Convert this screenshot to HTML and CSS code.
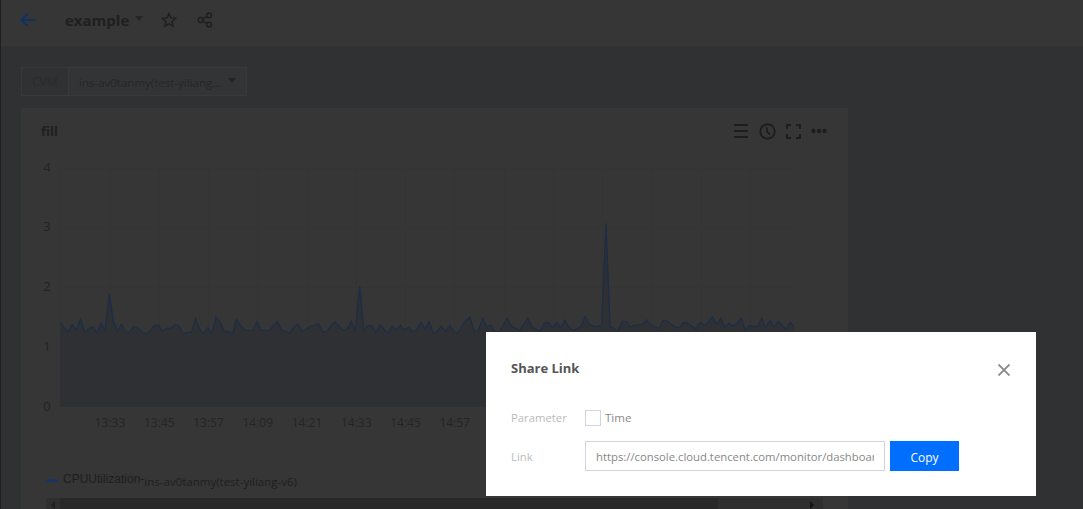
FILE: index.html
```html
<!DOCTYPE html>
<html lang="en">
<head>
<meta charset="utf-8">
<title>Share Link</title>
<link rel="stylesheet" href="styles.css">
</head>
<body>
<div class="page">
  <header class="topbar">
    <svg class="back" width="16" height="14" viewBox="0 0 16 14"><path d="M15.500 7H1.500M7.500 1L1.500 7L7.500 13" fill="none" stroke="#06316f" stroke-width="1.700"/></svg>
    <span class="dash-name">example</span>
    <span class="caret-small"></span>
    <svg class="star" width="16" height="16" viewBox="0 0 16 16"><path d="M8 1.600L9.900 5.900L14.600 6.400L11.100 9.500L12.100 14.100L8 11.700L3.900 14.100L4.900 9.500L1.400 6.400L6.100 5.900Z" fill="none" stroke="#1f1f1f" stroke-width="1.400" stroke-linejoin="miter"/></svg>
    <svg class="share" width="16" height="16" viewBox="0 0 16 16"><g fill="none" stroke="#1f1f1f" stroke-width="1.500"><circle cx="3.600" cy="8" r="2.400"/><circle cx="12" cy="3.400" r="2.400"/><circle cx="12" cy="12.600" r="2.400"/><path d="M5.700 6.800L9.900 4.600M5.700 9.200L9.900 11.400"/></g></svg>
  </header>
  <main class="content">
    <div class="filter">
      <span class="filter-label">CVM</span>
      <span class="filter-value">ins-av0tanmy(test-yiliang...</span>
      <span class="caret"></span>
    </div>
    <section class="card">
      <div class="card-head">
        <h2 class="card-title">fill</h2>
        <div class="tools">
          <svg width="16" height="16" viewBox="0 0 16 16"><path d="M1 2H15M1 8H15M1 14H15" stroke="#1d1d1d" stroke-width="2"/></svg>
          <svg width="17" height="17" viewBox="0 0 17 17"><circle cx="8.500" cy="8.500" r="7.200" fill="none" stroke="#1d1d1d" stroke-width="1.900"/><path d="M8 4.200V8.700L11 11.600" fill="none" stroke="#1d1d1d" stroke-width="1.700"/></svg>
          <svg width="15" height="15" viewBox="0 0 15 15"><path d="M1 5V1H5M10 1H14V5M14 10V14H10M5 14H1V10" fill="none" stroke="#1d1d1d" stroke-width="2"/></svg>
          <svg width="16" height="6" viewBox="0 0 16 6"><circle cx="2.500" cy="3" r="2.200" fill="#1d1d1d"/><circle cx="8" cy="3" r="2.200" fill="#1d1d1d"/><circle cx="13.500" cy="3" r="2.200" fill="#1d1d1d"/></svg>
        </div>
      </div>
      <svg class="chart" width="827" height="300" viewBox="21 150 827 300">
        <g class="grid">
          <path d="M60 168.500H795M60 227.500H795M60 287.500H795M60 347.500H795"/>
          <path d="M60.500 168V407M110.500 168V407M159.500 168V407M208.500 168V407M257.500 168V407M307.500 168V407M356.500 168V407M405.500 168V407M454.500 168V407M504.500 168V407M553.500 168V407M602.500 168V407M651.500 168V407M701.500 168V407M750.500 168V407"/>
        </g>
        <polygon class="area" points="60,407 60,322.300 64.100,327.700 68.200,331.700 72.300,324.300 76.400,330 80.500,319.300 84.600,332 88.700,329 92.800,326.700 96.900,333 101,323.300 105.100,330.300 109.300,294.300 113.400,321 117.500,331.300 121.600,324.300 125.700,332 129.800,332 133.900,326.300 138,328.300 142.100,331.700 146.200,334 150.300,330.700 154.400,325.300 158.500,325.300 162.600,331 166.800,328.300 170.900,328.300 175,324.300 179.100,326 183.200,334 187.300,332.300 191.400,332.300 195.500,318.300 199.600,329 203.700,333.300 207.800,327.700 211.900,333.300 216,317.300 220.100,322.300 224.300,331.300 228.400,331.300 232.500,334 236.600,319.300 240.700,325.700 244.800,330.300 248.900,330.300 253,330 257,321.700 261,330.300 265,330.300 269.300,330.300 273.300,325.700 277.300,321.700 281.700,330.300 285.700,331.300 289.700,333 293.700,327.300 298,324.300 302,331 306,329.300 310.300,326.300 314.300,325.300 318.300,323.300 322.700,332 326.700,331.300 330.700,326 335,322 339,325.700 343,330.300 347,329 351.300,321.300 355.300,331 359.700,286 363.700,330.300 367.700,326 371.700,325.300 376,332.300 380,324.700 384,329.300 388,333 392.300,326.300 396.300,330 400.300,325.300 404.300,330 408.700,327.300 412.700,331.300 416.700,330 421,322.300 425,329 429,321.700 433.300,333 437.300,331.700 441.300,325.700 445.700,331.300 449.700,325.300 453.700,331.300 457.700,333 462,326 466,320.300 470,317.300 474.300,331.300 478.300,330.300 482.700,318.300 486.700,326.700 491,325 495,331.700 499,331.700 503.300,325 507.300,318.300 511.700,326.700 515.700,328.300 519.700,330 524,324 528,318 532,327.300 536,329 540.300,331 544.300,323.300 548.300,322.300 552.700,327.300 556.700,322.300 560.700,328.300 564.700,320 569,327.300 573,330.300 577,328.700 581.300,326 585.300,316.300 589.300,324 593.700,326.300 597.700,326.300 601.700,325.300 606,223.300 610,326.300 614,328.700 618,330.700 622.300,321.300 626.300,321.300 630.300,327.300 634.300,325 638.700,325 642.700,324 646.700,320 651,325 655,327 659,328.300 663.300,320.300 667.300,321 671.300,324.300 675.700,327.300 679.700,327.300 683.700,322.300 687.700,323.300 692,326 696,329 700,322.300 704.300,325 708.300,322.300 712.300,316.700 716.700,324.300 720.700,318 724.700,327.300 728.700,323.300 733,326.300 737,323.300 741.300,318.300 745.300,330 749.300,325.300 753.300,326.300 757.700,326.300 761.700,318.300 765.700,327.300 770,320.300 774,327.300 778,321.700 782,325 786.300,329 790.300,322.300 794.300,327.300 794.300,407"/>
        <polyline class="line" points="60,322.300 64.100,327.700 68.200,331.700 72.300,324.300 76.400,330 80.500,319.300 84.600,332 88.700,329 92.800,326.700 96.900,333 101,323.300 105.100,330.300 109.300,294.300 113.400,321 117.500,331.300 121.600,324.300 125.700,332 129.800,332 133.900,326.300 138,328.300 142.100,331.700 146.200,334 150.300,330.700 154.400,325.300 158.500,325.300 162.600,331 166.800,328.300 170.900,328.300 175,324.300 179.100,326 183.200,334 187.300,332.300 191.400,332.300 195.500,318.300 199.600,329 203.700,333.300 207.800,327.700 211.900,333.300 216,317.300 220.100,322.300 224.300,331.300 228.400,331.300 232.500,334 236.600,319.300 240.700,325.700 244.800,330.300 248.900,330.300 253,330 257,321.700 261,330.300 265,330.300 269.300,330.300 273.300,325.700 277.300,321.700 281.700,330.300 285.700,331.300 289.700,333 293.700,327.300 298,324.300 302,331 306,329.300 310.300,326.300 314.300,325.300 318.300,323.300 322.700,332 326.700,331.300 330.700,326 335,322 339,325.700 343,330.300 347,329 351.300,321.300 355.300,331 359.700,286 363.700,330.300 367.700,326 371.700,325.300 376,332.300 380,324.700 384,329.300 388,333 392.300,326.300 396.300,330 400.300,325.300 404.300,330 408.700,327.300 412.700,331.300 416.700,330 421,322.300 425,329 429,321.700 433.300,333 437.300,331.700 441.300,325.700 445.700,331.300 449.700,325.300 453.700,331.300 457.700,333 462,326 466,320.300 470,317.300 474.300,331.300 478.300,330.300 482.700,318.300 486.700,326.700 491,325 495,331.700 499,331.700 503.300,325 507.300,318.300 511.700,326.700 515.700,328.300 519.700,330 524,324 528,318 532,327.300 536,329 540.300,331 544.300,323.300 548.300,322.300 552.700,327.300 556.700,322.300 560.700,328.300 564.700,320 569,327.300 573,330.300 577,328.700 581.300,326 585.300,316.300 589.300,324 593.700,326.300 597.700,326.300 601.700,325.300 606,223.300 610,326.300 614,328.700 618,330.700 622.300,321.300 626.300,321.300 630.300,327.300 634.300,325 638.700,325 642.700,324 646.700,320 651,325 655,327 659,328.300 663.300,320.300 667.300,321 671.300,324.300 675.700,327.300 679.700,327.300 683.700,322.300 687.700,323.300 692,326 696,329 700,322.300 704.300,325 708.300,322.300 712.300,316.700 716.700,324.300 720.700,318 724.700,327.300 728.700,323.300 733,326.300 737,323.300 741.300,318.300 745.300,330 749.300,325.300 753.300,326.300 757.700,326.300 761.700,318.300 765.700,327.300 770,320.300 774,327.300 778,321.700 782,325 786.300,329 790.300,322.300 794.300,327.300"/>
        <g class="y-labels">
          <text x="47" y="172">4</text>
          <text x="47" y="231">3</text>
          <text x="47" y="291">2</text>
          <text x="47" y="351">1</text>
          <text x="47" y="411">0</text>
        </g>
        <g class="x-labels">
          <text x="110" y="427">13:33</text>
          <text x="159.250" y="427">13:45</text>
          <text x="208.500" y="427">13:57</text>
          <text x="257.750" y="427">14:09</text>
          <text x="307" y="427">14:21</text>
          <text x="356.250" y="427">14:33</text>
          <text x="405.500" y="427">14:45</text>
          <text x="454.750" y="427">14:57</text>
        </g>
      </svg>
      <div class="legend">
        <span class="legend-mark"></span>
        <span class="legend-metric">CPUUtilization-</span><span class="legend-name">ins-av0tanmy(test-yiliang-v6)</span>
      </div>
      <div class="scrollbar">
        <span class="arrow-left"></span>
        <span class="thumb"></span>
        <span class="arrow-right"></span>
      </div>
    </section>
  </main>
</div>
<div class="dialog">
  <div class="dialog-head">
    <h3 class="dialog-title">Share Link</h3>
    <svg class="close" width="12" height="12" viewBox="0 0 12 12"><path d="M.500 .500L11.500 11.500M11.500 .500L.500 11.500" stroke="#888" stroke-width="1.800"/></svg>
  </div>
  <div class="form-row">
    <span class="form-label">Parameter</span>
    <span class="checkbox"></span>
    <span class="check-text">Time</span>
  </div>
  <div class="form-row link-row">
    <span class="form-label">Link</span>
    <span class="link-input"><span class="link-text">https://console.cloud.tencent.com/monitor/dashboard</span></span>
    <span class="copy-btn">Copy</span>
  </div>
</div>
</body>
</html>
```
FILE: styles.css
```css
* { box-sizing: border-box; }
html, body { margin: 0; padding: 0; height: 100%; overflow: hidden; }
body {
  background: #303133;
  font-family: "Open Sans", "Noto Sans", sans-serif;
  font-size: 11.500px;
  color: #222;
}
.page { height: 509px; border-left: 1px solid #1f1f1f; }
.topbar {
  display: flex;
  align-items: center;
  height: 46px;
  padding: 6px 0 12px 19px;
  background: #363636;
}
.dash-name { margin-left: 29px; font-size: 15px; font-weight: 700; color: #1f1f1f; }
.caret-small {
  margin: -3px 0 0 6px;
  border: 4px solid transparent;
  border-top: 5px solid #252525;
  border-bottom: 0;
}
.star { margin-left: 18px; }
.share { margin-left: 20px; }
.content { padding: 21px 0 0 20px; }
.filter {
  display: flex;
  align-items: center;
  width: 226px;
  height: 29px;
  border: 1px solid #38393b;
  background: #333436;
}
.filter-label {
  display: flex;
  align-items: center;
  justify-content: center;
  width: 47px;
  height: 100%;
  border-right: 1px solid #38393b;
  background: #303133;
  color: #2a2b2c;
  font-size: 12px;
}
.filter-value { margin-left: 10px; padding-top: 2px; color: #252627; white-space: nowrap; }
.caret {
  margin: -3px 10px 0 auto;
  border: 4px solid transparent;
  border-top: 5px solid #232323;
  border-bottom: 0;
}
.card {
  width: 827px;
  height: 420px;
  margin-top: 12px;
  background: #363636;
}
.card-head {
  display: flex;
  align-items: center;
  justify-content: space-between;
  height: 42px;
  padding: 4px 21px 0 20px;
}
.card-title { margin: 0; font-size: 13px; font-weight: 700; color: #1f1f1f; }
.tools { display: flex; align-items: center; gap: 10px; }
.chart { display: block; }
.grid path { fill: none; stroke: #343434; stroke-width: 1; }
.area { fill: #2e3034; }
.line { fill: none; stroke: #1c2d47; stroke-width: 1.200; }
.y-labels text { font-size: 13px; fill: #222; text-anchor: middle; font-family: "Open Sans", sans-serif; }
.x-labels text { font-size: 12px; fill: #252525; text-anchor: middle; font-family: "Open Sans", sans-serif; }
.legend {
  display: flex;
  align-items: center;
  height: 20px;
  margin-top: 20px;
  padding-left: 25px;
  color: #1e1e1e;
}
.legend-mark { width: 12px; height: 3px; margin-right: 5px; background: #1a3563; }
.legend-metric { position: relative; top: -1px; font-family: "Liberation Sans", sans-serif; font-size: 12px; }
.legend-name { position: relative; top: 1px; }
.scrollbar {
  display: flex;
  align-items: center;
  width: 777px;
  height: 13px;
  margin-left: 25px;
  margin-top: 8px;
  background: #2f2f2f;
}
.thumb { width: 658px; height: 100%; margin-left: 5px; background: #282828; }
.arrow-left {
  margin-left: 5px;
  border: 4px solid transparent;
  border-right: 4px solid #1f1f1f;
  border-left: 0;
}
.arrow-right {
  margin-left: 92px;
  border: 4px solid transparent;
  border-left: 4px solid #141414;
  border-right: 0;
}
.dialog {
  position: absolute;
  left: 486px;
  top: 332px;
  width: 550px;
  height: 164px;
  padding: 0 25px;
  background: #fff;
  color: #444;
}
.dialog-head {
  display: flex;
  align-items: flex-start;
  justify-content: space-between;
  height: 77px;
  padding-top: 27px;
}
.dialog-title { margin: 0; font-size: 13px; line-height: 18px; font-weight: 700; color: #555; }
.close { margin-top: 5px; margin-right: 1px; }
.form-row { display: flex; align-items: center; height: 17px; }
.form-label { width: 74px; font-size: 11.300px; color: #bbb; }
.checkbox { width: 16px; height: 16px; border: 1px solid #cfd5de; background: #fff; }
.check-text { margin-left: 4px; color: #888; }
.link-row { height: 30px; margin-top: 15px; }
.link-input {
  display: flex;
  align-items: center;
  width: 300px;
  height: 30px;
  padding: 0 10px;
  border: 1px solid #cfd5de;
  color: #888;
}
.link-text { display: block; width: 278px; overflow: hidden; white-space: nowrap; font-size: 11.300px; }
.copy-btn {
  display: flex;
  align-items: center;
  justify-content: center;
  width: 69px;
  height: 30px;
  margin-left: 5px;
  padding-top: 2px;
  background: #006eff;
  color: #fff;
  font-size: 12px;
}
```
